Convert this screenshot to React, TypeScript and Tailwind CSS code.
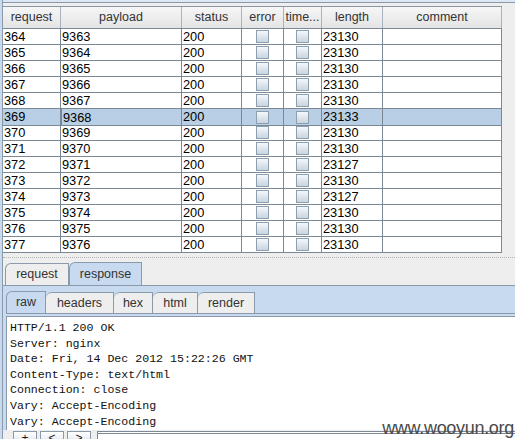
import React from 'react';

const rows: [string, string, string][] = [
  ['364', '9363', '23130'],
  ['365', '9364', '23130'],
  ['366', '9365', '23130'],
  ['367', '9366', '23130'],
  ['368', '9367', '23130'],
  ['369', '9368', '23133'],
  ['370', '9369', '23130'],
  ['371', '9370', '23130'],
  ['372', '9371', '23127'],
  ['373', '9372', '23130'],
  ['374', '9373', '23127'],
  ['375', '9374', '23130'],
  ['376', '9375', '23130'],
  ['377', '9376', '23130'],
];

const headers = ['request', 'payload', 'status', 'error', 'time...', 'length', 'comment'];

const responseLines = [
  'HTTP/1.1 200 OK',
  'Server: nginx',
  'Date: Fri, 14 Dec 2012 15:22:26 GMT',
  'Content-Type: text/html',
  'Connection: close',
  'Vary: Accept-Encoding',
  'Vary: Accept-Encoding',
];

function Check() {
  return (
    <div className="w-[13px] h-[13px] border border-[#8d9eae] bg-gradient-to-b from-[#f4f7fa] to-[#c9d5e1]" />
  );
}

const cols = 'grid grid-cols-[58px_121px_60px_42px_38px_61px_119px]';

export default function App() {
  return (
    <div className="relative w-[515px] h-[439px] overflow-hidden bg-[#eeeeee] flex font-['Liberation_Sans',Arial,sans-serif]">
      {/* left window edge */}
      <div className="w-[3px] shrink-0 bg-[#c8daf0] border-r border-[#8a9aaa]" />

      <div className="flex-1 flex flex-col min-w-0">
        {/* top edge */}
        <div className="h-[2px] shrink-0 bg-[#dce7f3]" />
        <div className="h-[1px] shrink-0 bg-[#8a9aaa]" />
        <div className="h-[3px] shrink-0" />

        {/* results table */}
        <div className="flex shrink-0">
          <div className="w-[499px] border-t border-[#8a96a3]">
            <div className={`${cols} h-[22px] bg-gradient-to-b from-[#f6f6f6] to-[#e4e4e4] border-b border-[#7d8996]`}>
              {headers.map((h) => (
                <div
                  key={h}
                  className="border-r border-[#a9b3bd] flex items-center justify-center text-[12.5px] text-[#333333]"
                >
                  {h}
                </div>
              ))}
            </div>
            {rows.map(([req, payload, length]) => {
              const selected = req === '369';
              return (
                <div
                  key={req}
                  className={`${cols} h-[16px] text-[12.8px] leading-[15px] text-black ${selected ? 'bg-[#b8cfe5]' : 'bg-white'}`}
                >
                  <div className="border-r border-b border-[#7a8794] pl-[1px]">{req}</div>
                  <div
                    className={`border-b border-[#7a8794] pl-[1px] ${selected ? 'border-r border-l border-t border-[#5f7386] -mt-[1px] pt-[1px]' : 'border-r'}`}
                  >
                    {payload}
                  </div>
                  <div className="border-r border-b border-[#7a8794] pl-[1px]">200</div>
                  <div className="border-r border-b border-[#7a8794] flex items-center justify-center">
                    <Check />
                  </div>
                  <div className="border-r border-b border-[#7a8794] flex items-center justify-center">
                    <Check />
                  </div>
                  <div className="border-r border-b border-[#7a8794] pl-[1px]">{length}</div>
                  <div className="border-r border-b border-[#7a8794]" />
                </div>
              );
            })}
          </div>
        </div>

        {/* splitter */}
        <div className="h-[9px] shrink-0 flex items-center">
          <div className="w-full border-t border-dotted border-[#b4b4b4]" />
        </div>

        {/* outer tabs */}
        <div className="flex items-end h-[23px] shrink-0 pl-[2px]">
          <div className="h-[22px] w-[64px] border border-b-0 border-[#8a9aaa] rounded-tl-[6px] bg-[#eeeeee] flex items-center justify-center text-[12.5px] text-[#333333]">
            request
          </div>
          <div className="h-[23px] w-[73px] border border-b-0 border-[#8a9aaa] rounded-tl-[6px] bg-[#c8daf0] flex items-center justify-center text-[12.5px] text-[#333333]">
            response
          </div>
        </div>

        {/* response panel */}
        <div className="h-[154px] shrink-0 bg-[#c8daf0] border-t border-[#8a9aaa] flex flex-col pl-[3px] pt-[5px]">
          <div className="flex items-end h-[22px] shrink-0">
            <div className="h-[22px] w-[40px] border border-b-0 border-[#8a9aaa] rounded-tl-[6px] bg-[#c8daf0] flex items-center justify-center text-[12.5px] text-[#333333]">
              raw
            </div>
            {[
              ['headers', 'w-[68px]'],
              ['hex', 'w-[39px]'],
              ['html', 'w-[45px]'],
              ['render', 'w-[57px]'],
            ].map(([t, w]) => (
              <div
                key={t}
                className={`h-[21px] ${w} border border-b-0 border-l-0 border-[#8a9aaa] rounded-tl-[6px] bg-[#eeeeee] flex items-center justify-center text-[12.5px] text-[#333333]`}
              >
                {t}
              </div>
            ))}
          </div>
          <div className="h-[3px] shrink-0 border-t border-[#8a9aaa]" />
          <div className="h-[114px] shrink-0 bg-white border-l border-t border-[#8a9aaa] pl-[3px] pt-[3px] overflow-hidden font-['Liberation_Mono','Courier_New',monospace] text-[11.6px] leading-[15.6px] text-[#111111] whitespace-pre">
            {responseLines.map((l, i) => (
              <div key={i}>{l}</div>
            ))}
          </div>
          <div className="flex-1 flex items-start gap-[3px] pt-[1px] bg-[#eeeeee] -ml-[3px] pl-[10px] overflow-hidden">
            {['+', '<', '>'].map((b) => (
              <div
                key={b}
                className="h-[14px] w-[24px] shrink-0 border border-[#8a9aaa] bg-gradient-to-b from-white to-[#dde3ea] flex justify-center text-[12px] leading-[13px] text-[#222222]"
              >
                {b}
              </div>
            ))}
            <div className="flex-1 h-[14px] border-t-[3px] border-double border-l border-[#7d8996] bg-white ml-[3px]" />
          </div>
        </div>
      </div>

      {/* watermark */}
      <div className="absolute right-[1px] bottom-[0px] text-[18px] leading-[21px] text-[#4a4a4a] tracking-[-0.3px]">
        www.wooyun.org
      </div>
    </div>
  );
}
